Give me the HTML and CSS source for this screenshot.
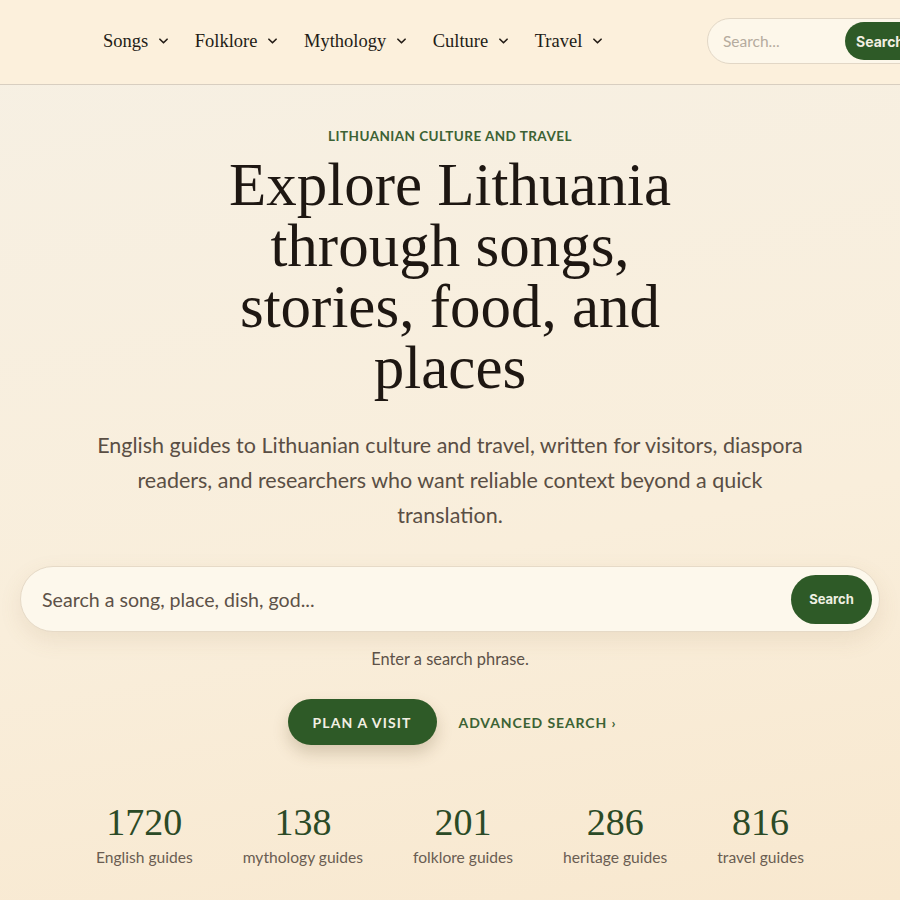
FILE: index.html
```html
<!DOCTYPE html>
<html lang="en">
<head>
<meta charset="utf-8">
<title>Lithuanian Culture and Travel</title>
<link rel="stylesheet" href="styles.css">
</head>
<body>
<header class="site-header">
  <nav class="main-nav">
    <a class="nav-item" href="#">Songs <svg class="chev" viewBox="0 0 10 6"><path d="M1 1l4 4 4-4"/></svg></a>
    <a class="nav-item" href="#">Folklore <svg class="chev" viewBox="0 0 10 6"><path d="M1 1l4 4 4-4"/></svg></a>
    <a class="nav-item" href="#">Mythology <svg class="chev" viewBox="0 0 10 6"><path d="M1 1l4 4 4-4"/></svg></a>
    <a class="nav-item" href="#">Culture <svg class="chev" viewBox="0 0 10 6"><path d="M1 1l4 4 4-4"/></svg></a>
    <a class="nav-item" href="#">Travel <svg class="chev" viewBox="0 0 10 6"><path d="M1 1l4 4 4-4"/></svg></a>
  </nav>
  <form class="head-search">
    <span class="head-placeholder">Search...</span>
    <button class="head-btn" type="button">Search</button>
  </form>
</header>
<main class="hero">
  <p class="eyebrow">LITHUANIAN CULTURE AND TRAVEL</p>
  <h1 class="title">Explore Lithuania through songs, stories, food, and places</h1>
  <p class="lead">English guides to Lithuanian culture and travel, written for visitors, diaspora readers, and researchers who want reliable context beyond a quick translation.</p>
  <div class="big-search">
    <span class="big-placeholder">Search a song, place, dish, god...</span>
    <button class="big-btn" type="button">Search</button>
  </div>
  <p class="hint">Enter a search phrase.</p>
  <div class="actions">
    <a class="btn-primary" href="#">PLAN A VISIT</a>
    <a class="btn-link" href="#">ADVANCED SEARCH ›</a>
  </div>
  <div class="stats">
    <div class="stat"><span class="num">1720</span><span class="label">English guides</span></div>
    <div class="stat"><span class="num">138</span><span class="label">mythology guides</span></div>
    <div class="stat"><span class="num">201</span><span class="label">folklore guides</span></div>
    <div class="stat"><span class="num">286</span><span class="label">heritage guides</span></div>
    <div class="stat"><span class="num">816</span><span class="label">travel guides</span></div>
  </div>
</main>
</body>
</html>
```

FILE: styles.css
```css
* { box-sizing: border-box; }
html, body { margin: 0; padding: 0; }
body {
  width: 900px;
  min-height: 900px;
  overflow: hidden;
  font-family: "Lato", "Noto Sans", sans-serif;
  color: #2a211b;
  background: linear-gradient(170deg, #f6f0e4 0%, #f9eedb 60%, #f8e8cf 100%);
}
.site-header {
  height: 85px;
  display: flex;
  align-items: center;
  padding-left: 103px;
  padding-bottom: 2px;
  background: #fcf0dc;
  border-bottom: 1px solid #d8cec0;
}
.main-nav {
  display: flex;
  align-items: center;
  gap: 26.5px;
  flex-shrink: 0;
}
.nav-item {
  display: flex;
  align-items: center;
  gap: 11px;
  font-family: "Liberation Serif", "DejaVu Serif", serif;
  font-size: 18.5px;
  color: #231c16;
  text-decoration: none;
}
.chev {
  width: 9px;
  height: 6px;
  fill: none;
  stroke: #231c16;
  stroke-width: 1.8;
  stroke-linecap: round;
  stroke-linejoin: round;
}
.head-search {
  flex-shrink: 0;
  margin: 0 -37px 0 auto;
  width: 230px;
  height: 46px;
  display: flex;
  align-items: center;
  justify-content: space-between;
  padding: 0 0 0 15px;
  border: 1px solid #e2d7c6;
  border-radius: 23px;
  background: #fdf7ea;
}
.head-placeholder {
  font-size: 15.5px;
  color: #b5ab9e;
}
.head-btn {
  height: 38px;
  width: 84px;
  margin-right: 7px;
  border: 0;
  border-radius: 19px;
  background: #2e5a27;
  color: #f3efe2;
  font-family: "Inter", "Lato", sans-serif;
  font-weight: 700;
  font-size: 14px;
  text-align: left;
  padding-left: 11px;
}
.hero {
  display: flex;
  flex-direction: column;
  align-items: center;
  padding-top: 42px;
}
.eyebrow {
  margin: 0;
  font-size: 13.5px;
  font-weight: 700;
  letter-spacing: 0.45px;
  color: #3c6234;
  line-height: 18px;
}
.title {
  margin: 9px 0 0;
  width: 480px;
  text-align: center;
  font-family: "Liberation Serif", "DejaVu Serif", serif;
  font-weight: 400;
  font-size: 61px;
  line-height: 61px;
  color: #1e1712;
}
.lead {
  margin: 30px 0 0;
  width: 716px;
  text-align: center;
  font-size: 21.5px;
  line-height: 35px;
  color: #5a4e44;
}
.big-search {
  margin-top: 33px;
  width: 860px;
  height: 66px;
  display: flex;
  align-items: center;
  justify-content: space-between;
  padding: 0 7px 0 21px;
  border: 1px solid #e6dac7;
  border-radius: 33px;
  background: #fdf8ec;
  box-shadow: 0 8px 22px rgba(150, 115, 70, 0.12);
}
.big-placeholder {
  font-size: 19.6px;
  color: #5d5248;
}
.big-btn {
  width: 81px;
  height: 49px;
  border: 0;
  border-radius: 25px;
  background: #2e5a27;
  color: #eef0e2;
  font-family: "Inter", "Lato", sans-serif;
  font-weight: 700;
  font-size: 13px;
}
.hint {
  margin: 17px 0 0;
  font-size: 16.4px;
  line-height: 20px;
  color: #5d5248;
}
.actions {
  margin-top: 30px;
  display: flex;
  align-items: center;
  gap: 22px;
  padding-left: 4px;
}
.btn-primary {
  display: flex;
  align-items: center;
  justify-content: center;
  width: 149px;
  height: 46px;
  border-radius: 23px;
  background: #2e5a27;
  color: #f2efe3;
  text-decoration: none;
  font-size: 14px;
  font-weight: 700;
  letter-spacing: 1.1px;
  box-shadow: 0 8px 16px rgba(90, 70, 30, 0.22);
}
.btn-link {
  color: #3c6234;
  text-decoration: none;
  font-size: 14px;
  font-weight: 700;
  letter-spacing: 0.9px;
}
.stats {
  margin-top: 56px;
  display: flex;
  gap: 50px;
}
.stat {
  display: flex;
  flex-direction: column;
  align-items: center;
}
.num {
  font-family: "Liberation Serif", "DejaVu Serif", serif;
  font-size: 38px;
  line-height: 42px;
  color: #2b4a26;
}
.label {
  margin-top: 5px;
  font-size: 15.6px;
  color: #6a5d52;
}
```
